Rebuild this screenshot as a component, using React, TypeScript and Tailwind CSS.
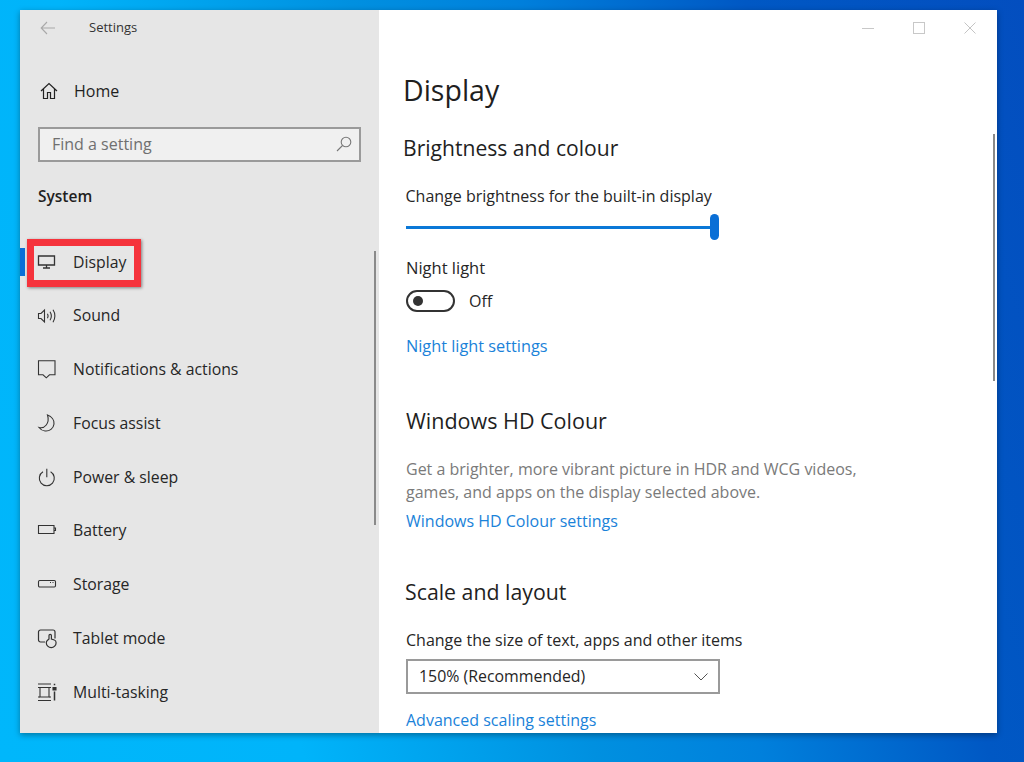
const font = { fontFamily: '"Open Sans", sans-serif' };

const I = ({ children }: { children: React.ReactNode }) => (
  <svg width="20" height="20" viewBox="0 0 20 20" fill="none" stroke="#333" strokeWidth="1.1" className="shrink-0">
    {children}
  </svg>
);

const icons: Record<string, React.ReactNode> = {
  Display: (<I><path d="M1.500 3h16v9h-16z" strokeWidth="1.300" /><path d="M9.500 12v2.700M6 15h7" strokeWidth="1.300" /></I>),
  Sound: (<I><path d="M1.500 7.500h2.500l3.500-3.500v12l-3.500-3.500h-2.500z" /><path d="M10.500 7.800c.8 1.400.8 3 0 4.400M13 5.800c1.600 2.500 1.600 6 0 8.500M16 3.800c2.500 3.600 2.500 8.800 0 12.400" /></I>),
  "Notifications & actions": (<I><path d="M1.500 .800h16.500v14h-5.500l-3.200 3-3.300-3h-4.500z" /></I>),
  "Focus assist": (<I><path d="M10.500 1c4 1.500 7 5 6.500 9-.5 4.500-4.500 7.500-9 7-2.500-.2-4.500-1.500-6-3.500 5.500 1.500 11-4 8.500-12.500z" /></I>),
  "Power & sleep": (<I><path d="M9.800 .800v8.500" /><path d="M6 3.800a7.500 7.500 0 1 0 7.600 0" /></I>),
  Battery: (<I><path d="M1.500 4.500h15.500v8h-15.500z" /><path d="M17 7h1.500v2.500h-1.500" /></I>),
  Storage: (<I><rect x="1.500" y="5.500" width="17" height="6.500" rx="1.200" /><path d="M13 7.500h1M15.500 7.500h1" /></I>),
  "Tablet mode": (
    <I>
      <path d="M8 13h-4.500a2 2 0 0 1-2-2v-8a2 2 0 0 1 2-2h12.500a2 2 0 0 1 2 2v6.500" strokeWidth="1.200" />
      <path d="M12 10V6.500a1.200 1.200 0 0 1 2.400 0V10l3 1c1 .3 1.700 1 1.700 2.700a4.900 4.900 0 0 1-9.800 0c0-1 .5-1.700 1-2.200l1.700-1.500z" fill="#e6e6e6" strokeWidth="1.200" />
    </I>
  ),
  "Multi-tasking": (<I><path d="M1 1h13M1 17.500h13M3 4.500h9v9.500h-9z" /><path d="M1 4.500h2M1 14h2M12 4.500h2M12 14h2" /><path d="M17.500 .800v1.500M17.500 8.500v9" strokeWidth="1.500" /><path d="M16 4.500h3v2.500h-3z" fill="#333" /></I>),
};

const items = ["Display", "Sound", "Notifications & actions", "Focus assist", "Power & sleep", "Battery", "Storage", "Tablet mode", "Multi-tasking"];

export default function App() {
  return (
    <div style={font} className="relative h-[762px] w-[1024px] overflow-hidden bg-[linear-gradient(72deg,#00b7fb_0%,#00b4fa_24%,#0090e0_47%,#0080dc_60%,#0058c4_78%,#034ebf_100%)] pl-[20px] pt-[10px]">
      <div className="flex h-[723px] w-[977px] overflow-hidden shadow-[0_2px_6px_rgba(0,0,0,0.35)]">
        <aside className="relative flex w-[359px] shrink-0 flex-col bg-[#e6e6e6]">
          <div className="flex h-[36px] items-center pl-[20px]">
            <svg width="15" height="14" viewBox="0 0 15 14" fill="none" stroke="#a8a8a8" strokeWidth="1.100"><path d="M15 7H1.200M7 1 1.200 7 7 13" /></svg>
            <span className="ml-[34px] text-[13px] text-[#333]">Settings</span>
          </div>
          <div className="mt-[27px] flex h-[36px] items-center pl-[20px]">
            <svg width="18" height="18" viewBox="0 0 18 18" fill="none" stroke="#222" strokeWidth="1.200"><path d="M1 9 9 1.500 17 9M3.500 7v9.500h4v-6h3v6h4V7" /></svg>
            <span className="ml-[16px] text-[16px] text-[#1f1f1f]">Home</span>
          </div>
          <div className="mx-[18px] mt-[18px] flex h-[35px] w-[323px] items-center justify-between border-2 border-[#9a9a9a] bg-[#f0f0f0] pb-px pl-[12px] pr-[7px]">
            <span className="text-[16px] leading-[24px] text-[#6f6f6f]">Find a setting</span>
            <svg width="16" height="16" viewBox="0 0 16 16" fill="none" stroke="#777" strokeWidth="1.100"><circle cx="10" cy="6" r="4.800" /><path d="M6.500 9.500 1 15" /></svg>
          </div>
          <div className="mt-[22px] pl-[18px] text-[15.500px] font-semibold leading-[24px] text-[#1f1f1f]">System</div>
          <nav className="mt-[27.700px] flex flex-col">
            {items.map((name, i) => (
              <div key={name} className="relative flex h-[53.750px] items-center pl-[17px]">
                {i === 0 && <span className="absolute left-0 top-[12px] h-[28px] w-[5px] bg-[#0a6fd8]" />}
                {icons[name]}
                <span className="ml-[16px] text-[15.800px] text-[#262626]">{name}</span>
              </div>
            ))}
          </nav>
          <span className="absolute right-[3px] top-[241px] h-[274px] w-[2px] bg-[#8a8a8a]" />
          <span className="absolute left-[7px] top-[229px] h-[48px] w-[114px] border-[7px] border-[#f5333c] shadow-[1px_1px_3px_rgba(0,0,0,0.45)]" />
        </aside>
        <main className="relative flex-1 bg-white pl-[24px]">
          <div className="absolute right-[21px] top-[12px] flex items-center gap-[39px]">
            <span className="h-px w-[12px] bg-[#c8c8c8]" />
            <span className="h-[12px] w-[12px] border border-[#c8c8c8]" />
            <svg width="12" height="12" viewBox="0 0 12 12" fill="none" stroke="#c4c4c4" strokeWidth="1"><path d="M.5.500l11 11M11.500.500l-11 11" /></svg>
          </div>
          <span className="absolute right-[2px] top-[124px] h-[247px] w-[2px] bg-[#8a8a8a]" />
          <h1 className="mt-[58px] text-[28.500px] font-normal leading-[44px] text-[#1f1f1f]">Display</h1>
          <h2 className="mt-[20px] text-[21.100px] leading-[32px] text-[#1f1f1f]">Brightness and colour</h2>
          <p className="ml-[2.500px] mt-[20px] text-[16px] leading-[24px] text-[#262626]">Change brightness for the built-in display</p>
          <div className="relative ml-[3px] mt-[6px] flex h-[26px] w-[313px] items-center">
            <span className="h-[3px] w-full bg-[#0a78d7]" />
            <span className="absolute right-0 top-0 h-[26px] w-[9px] rounded-full bg-[#0a6fd6]" />
          </div>
          <p className="ml-[3px] mt-[16px] text-[16.500px] leading-[24px] text-[#262626]">Night light</p>
          <div className="ml-[3px] mt-[10px] flex h-[22px] items-center">
            <span className="flex h-[22px] w-[49px] items-center rounded-full border-2 border-[#333] pl-[5px]">
              <span className="h-[10px] w-[10px] rounded-full bg-[#333]" />
            </span>
            <span className="ml-[14px] text-[16px] text-[#262626]">Off</span>
          </div>
          <a className="ml-[3px] mt-[22px] block text-[16.300px] leading-[24px] text-[#1a82d9]">Night light settings</a>
          <h2 className="ml-[3px] mt-[47px] text-[21.500px] leading-[32px] text-[#1f1f1f]">Windows HD Colour</h2>
          <p className="ml-[3px] mt-[21px] w-[480px] text-[16px] leading-[23px] text-[#7a7a7a]">Get a brighter, more vibrant picture in HDR and WCG videos, games, and apps on the display selected above.</p>
          <a className="ml-[3px] mt-[5px] block text-[16px] leading-[24px] text-[#1a82d9]">Windows HD Colour settings</a>
          <h2 className="ml-[2px] mt-[43px] text-[21.300px] leading-[32px] text-[#1f1f1f]">Scale and layout</h2>
          <p className="ml-[3px] mt-[20px] text-[16px] leading-[24px] text-[#262626]">Change the size of text, apps and other items</p>
          <div className="ml-[3px] mt-[7px] flex h-[35px] w-[314px] items-center justify-between border-2 border-[#9a9a9a] pl-[11px] pr-[10px]">
            <span className="text-[15.900px] text-[#262626]">150% (Recommended)</span>
            <svg width="14" height="8" viewBox="0 0 14 8" fill="none" stroke="#555" strokeWidth="1"><path d="M.5.500 7 7 13.500.500" /></svg>
          </div>
          <a className="ml-[3px] mt-[14px] block text-[16px] leading-[24px] text-[#1a82d9]">Advanced scaling settings</a>
        </main>
      </div>
    </div>
  );
}
